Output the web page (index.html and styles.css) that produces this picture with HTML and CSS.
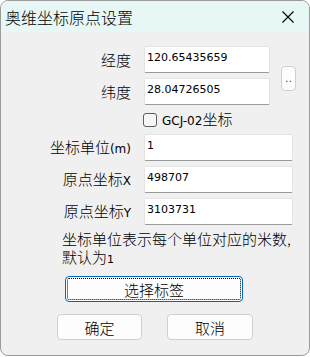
FILE: index.html
```html
<!DOCTYPE html>
<html lang="zh">
<head>
  <meta charset="UTF-8" />
  <title>奥维坐标原点设置</title>
  <link rel="stylesheet" href="styles.css">
</head>
<body>

<div class="window">
  <div class="titlebar">
    <span class="title">奥维坐标原点设置</span>
    <svg class="close" width="12" height="12" viewBox="0 0 12 12">
      <path d="M0.5 0.5 L11.5 11.5 M11.5 0.5 L0.5 11.5" stroke="#000" stroke-width="1.1" fill="none"/>
    </svg>
  </div>

  <div class="content">
    <div class="coord-group">
      <div class="coord-rows">
        <div class="row">
          <span class="label">经度</span>
          <input class="field" value="120.65435659">
        </div>
        <div class="row">
          <span class="label">纬度</span>
          <input class="field" value="28.04726505">
        </div>
      </div>
      <button class="pick-btn">..</button>
    </div>

    <div class="check-row">
      <span class="checkbox"></span>
      <span class="check-label"><span class="latin">GCJ-02</span>坐标</span>
    </div>

    <div class="row">
      <span class="label">坐标单位<span class="latin">(m)</span></span>
      <input class="field wide" value="1">
    </div>
    <div class="row">
      <span class="label">原点坐标<span class="latin">X</span></span>
      <input class="field wide" value="498707">
    </div>
    <div class="row">
      <span class="label">原点坐标<span class="latin">Y</span></span>
      <input class="field wide" value="3103731">
    </div>

    <div class="note">坐标单位表示每个单位对应的米数,<br>默认为<span class="latin">1</span></div>

    <button class="btn select-btn">选择标签</button>

    <div class="actions">
      <button class="btn">确定</button>
      <button class="btn">取消</button>
    </div>
  </div>
</div>

</body>
</html>
```

FILE: styles.css
```css
html, body {
    margin: 0;
    padding: 0;
    background: #fff;
}
body {
    font-family: "Noto Sans CJK SC", sans-serif;
    font-size: 15px;
    font-weight: 300;
    color: #000;
}

.window {
    width: 310px;
    height: 356px;
    box-sizing: border-box;
    border: 1px solid #9b9b9b;
    border-radius: 8px;
    background: #f0f0f0;
    overflow: hidden;
}

.titlebar {
    height: 31px;
    background: #e6f7f5;
    display: flex;
    align-items: center;
    justify-content: space-between;
    padding: 0 15px 0 4px;
}
.title {
    font-size: 16px;
    line-height: 20px;
}

.content {
    padding-top: 14px;
}

.latin {
    font-family: "DejaVu Sans", sans-serif;
    font-size: 12px;
    font-weight: 400;
}

.row {
    display: flex;
    align-items: center;
    height: 27px;
    margin-bottom: 5px;
}
.label {
    width: 130px;
    margin-right: 13px;
    text-align: right;
    line-height: 20px;
}
.field {
    width: 126px;
    height: 27px;
    box-sizing: border-box;
    margin: 0;
    padding: 4px 2px 8px;
    border: 1px solid #e4e4e4;
    border-bottom-color: #9a9a9a;
    border-radius: 2px;
    background: #fff;
    font-family: "DejaVu Sans", sans-serif;
    font-size: 11px;
    color: #000;
    outline: none;
}
.field.wide { width: 149px; }

.coord-group {
    display: flex;
}
.pick-btn {
    width: 15px;
    height: 25px;
    margin: 20px 0 0 11px;
    padding: 0;
    border: 1px solid #cfcfcf;
    border-radius: 4px;
    background: #fdfdfd;
    font-family: "DejaVu Sans", sans-serif;
    font-size: 11px;
    color: #1f5fa0;
}

.check-row {
    display: flex;
    align-items: center;
    height: 19px;
    margin: 0 0 5px 142px;
}
.checkbox {
    width: 12px;
    height: 12px;
    border: 1px solid #5c5c5c;
    border-radius: 3px;
    background: #f6f6f6;
    margin-right: 5px;
}
.check-label {
    line-height: 19px;
}

.note {
    margin: 4px 0 0 61px;
    line-height: 18px;
}
.note .latin { font-size: 11px; }

.btn {
    height: 26px;
    padding: 0;
    border: 1px solid #d0d0d0;
    border-radius: 4px;
    background: #fdfdfd;
    font-family: "Noto Sans CJK SC", sans-serif;
    font-size: 15px;
    font-weight: 300;
    color: #000;
}
.select-btn {
    display: block;
    width: 178px;
    margin: 7px 0 0 64px;
    border-color: #0067c0;
    outline: 1px dotted #000;
    outline-offset: -3px;
}
.actions {
    display: flex;
    gap: 25px;
    margin: 12px 0 0 56px;
}
.actions .btn { width: 85px; }
.actions .btn + .btn { width: 86px; }
```
